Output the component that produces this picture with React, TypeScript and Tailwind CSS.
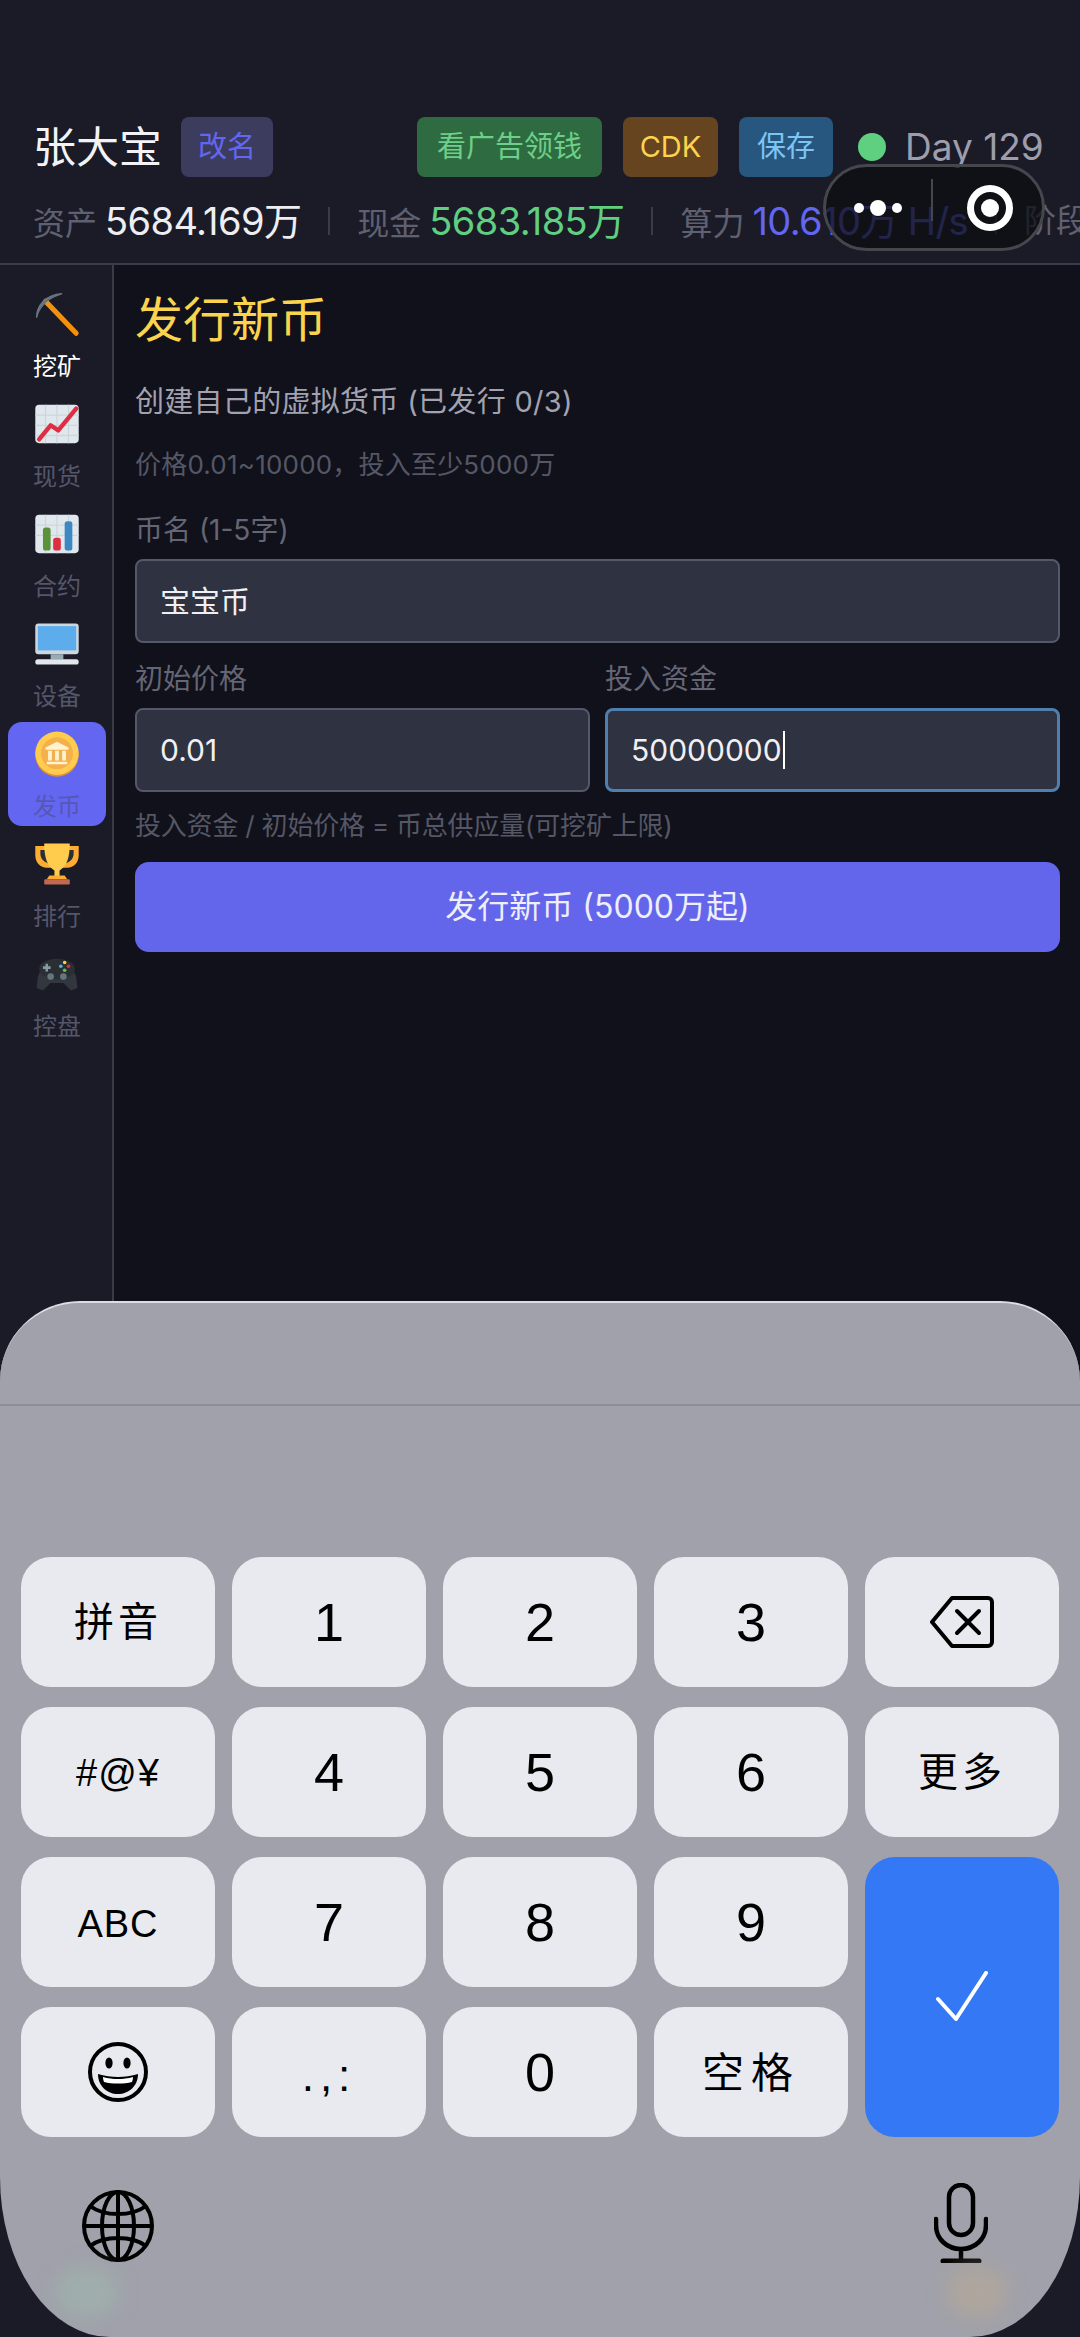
import type { ReactNode } from 'react';

const FONT = "font-['Inter','Noto_Sans_CJK_SC',sans-serif]";

function PickIcon() {
  return (
    <svg viewBox="0 0 36 36" className="h-[46px] w-[46px]">
      <path d="M33 33 9 8" stroke="#f4900c" strokeWidth="4" strokeLinecap="round" />
      <path d="M2 21C2 11 9 3 22 2c-6 2-11 4-14 8-3 3-5 6-6 11z" fill="#66757f" stroke="#66757f" strokeWidth="1" />
    </svg>
  );
}

function ChartUpIcon() {
  return (
    <svg viewBox="0 0 36 36" className="h-[46px] w-[46px]">
      <rect x="1" y="3" width="34" height="30" rx="3" fill="#e1e8ed" />
      <path d="M1 11h34M1 19h34M1 27h34M9 3v30M18 3v30M27 3v30" stroke="#ccd6dd" strokeWidth="1" />
      <path d="M4 30 13 19l6 4L33 6" fill="none" stroke="#dd2e44" strokeWidth="3.4" strokeLinecap="round" strokeLinejoin="round" />
    </svg>
  );
}

function BarsIcon() {
  return (
    <svg viewBox="0 0 36 36" className="h-[46px] w-[46px]">
      <rect x="1" y="3" width="34" height="30" rx="3" fill="#e1e8ed" />
      <path d="M1 11h34M1 19h34M9 3v30M18 3v30M27 3v30" stroke="#ccd6dd" strokeWidth="1" />
      <rect x="7" y="13" width="6" height="18" rx="2" fill="#5c913b" />
      <rect x="15" y="21" width="6" height="10" rx="2" fill="#dd2e44" />
      <rect x="24" y="8" width="6" height="23" rx="2" fill="#3b88c3" />
    </svg>
  );
}

function DesktopIcon() {
  return (
    <svg viewBox="0 0 36 36" className="h-[46px] w-[46px]">
      <rect x="1" y="2" width="34" height="24" rx="2.5" fill="#ccd6dd" />
      <rect x="3" y="4" width="30" height="19" fill="#5dadec" />
      <path d="M13 26h10v4H13z" fill="#99aab5" />
      <rect x="1" y="30" width="34" height="4" rx="2" fill="#e1e8ed" />
    </svg>
  );
}

function CoinIcon() {
  return (
    <svg viewBox="0 0 36 36" className="h-[46px] w-[46px]">
      <circle cx="18" cy="18.8" r="17" fill="#e0912f" />
      <circle cx="18" cy="17.4" r="17" fill="#ffcc4d" />
      <circle cx="18" cy="17.4" r="12.5" fill="#f4b04a" />
      <path d="M18 8.5 27 13v1.6H9V13z M10 24h16v2H10z M11 15.5h3v7.5h-3z M16.5 15.5h3v7.5h-3z M22 15.5h3v7.5h-3z" fill="#fff2cf" />
    </svg>
  );
}

function TrophyIcon() {
  return (
    <svg viewBox="0 0 36 36" className="h-[46px] w-[46px]">
      <path d="M1 4h34v7c0 6-4 10-9 10H10C5 21 1 17 1 11z" fill="#ffac33" />
      <path d="M5 7h5c0 4 1 8 3 11-5-1-8-4-8-8z M31 7h-5c0 4-1 8-3 11 5-1 8-4 8-8z" fill="#292f33" />
      <path d="M8 2h20c0 10-2 18-8 21v5h-4v-5C10 20 8 12 8 2z" fill="#ffcc4d" />
      <path d="M12 27h12l2 3H10z" fill="#ffac33" />
      <rect x="8" y="30" width="20" height="4" rx="1" fill="#c1694f" />
    </svg>
  );
}

function GamepadIcon() {
  return (
    <svg viewBox="0 0 36 36" className="h-[46px] w-[46px]">
      <path d="M3 20 8 9h20l5 11 1 9-5 2-6-6H13l-6 6-5-2z" fill="#31373d" />
      <ellipse cx="18" cy="14" rx="14" ry="8" fill="#292f33" />
      <path d="M9 10h2v2h2v2h-2v2H9v-2H7v-2h2z" fill="#8899a6" />
      <circle cx="24" cy="9" r="1.4" fill="#ffcc4d" />
      <circle cx="24" cy="15" r="1.4" fill="#77b255" />
      <circle cx="21" cy="12" r="1.4" fill="#55acee" />
      <circle cx="27" cy="12" r="1.4" fill="#dd2e44" />
      <circle cx="13" cy="20" r="2.6" fill="#66757f" />
      <circle cx="23" cy="20" r="2.6" fill="#66757f" />
    </svg>
  );
}

const NAV: { label: string; icon: ReactNode; active?: boolean; current?: boolean }[] = [
  { label: '挖矿', icon: <PickIcon />, current: true },
  { label: '现货', icon: <ChartUpIcon /> },
  { label: '合约', icon: <BarsIcon /> },
  { label: '设备', icon: <DesktopIcon /> },
  { label: '发币', icon: <CoinIcon />, active: true },
  { label: '排行', icon: <TrophyIcon /> },
  { label: '控盘', icon: <GamepadIcon /> },
];

function Tag({ className, children }: { className: string; children: ReactNode }) {
  return (
    <span className={`flex h-[60px] items-center justify-center rounded-[8px] text-[29px] ${className}`}>
      {children}
    </span>
  );
}

function Stat({ label, value, color }: { label: string; value: string; color: string }) {
  return (
    <span className="flex shrink-0 items-baseline gap-[8px]">
      <span className="text-[32px] text-[#5f6070]">{label}</span>
      {value && <span className={`text-[38px] tracking-[-0.6px] ${color}`}>{value}</span>}
    </span>
  );
}

function Header() {
  return (
    <header className="shrink-0 border-b-2 border-[#3a3b49] bg-[#1a1b27] pb-[20px] pl-[33px] pt-[117px]">
      <div className="flex h-[60px] items-center">
        <span className="w-[129px] whitespace-nowrap text-[43px] text-[#f3f3f6]">张大宝</span>
        <Tag className="ml-[19px] w-[92px] bg-[#3c3c5e] text-[#6366f1]">改名</Tag>
        <Tag className="ml-[144px] w-[185px] bg-[#2f6b40] text-[#6dcf8a]">看广告领钱</Tag>
        <Tag className="ml-[21px] w-[95px] bg-[#664420] text-[#fcd34d]">CDK</Tag>
        <Tag className="ml-[21px] w-[94px] bg-[#27567f] text-[#7cc4f4]">保存</Tag>
        <span className="ml-[25px] h-[28px] w-[28px] rounded-full bg-[#5fcf80]" />
        <span className="ml-[19px] whitespace-nowrap text-[37px] text-[#9d9dac]">Day 129</span>
      </div>
      <div className="mt-[22px] flex h-[44px] items-center overflow-hidden whitespace-nowrap">
        <Stat label="资产" value="5684.169万" color="text-[#eeeef2]" />
        <span className="mx-[27px] h-[28px] w-[2px] shrink-0 bg-[#3a3b49]" />
        <Stat label="现金" value="5683.185万" color="text-[#5fcf80]" />
        <span className="mx-[27px] h-[28px] w-[2px] shrink-0 bg-[#3a3b49]" />
        <Stat label="算力" value="10.610万 H/s" color="text-[#6366f1]" />
        <span className="mx-[27px] h-[28px] w-[2px] shrink-0 bg-[#3a3b49]" />
        <Stat label="阶段" value="" color="" />
      </div>
    </header>
  );
}

function Sidebar() {
  return (
    <nav className="flex w-[114px] shrink-0 flex-col gap-[6px] border-r-2 border-[#3a3b49] bg-[#1a1b27] pl-[8px] pr-[6px] pt-[17px]">
      {NAV.map(item => (
        <div
          key={item.label}
          className={`flex h-[104px] flex-col items-center rounded-[14px] pt-[9px] ${item.active ? 'bg-[#6366f1]' : ''}`}
        >
          <div className="flex h-[46px] items-center justify-center">{item.icon}</div>
          <span className={`mt-[14px] text-[24px] leading-[32px] ${item.current ? 'text-white' : item.active ? 'text-[#5557b4]' : 'text-[#55566a]'}`}>
            {item.label}
          </span>
        </div>
      ))}
    </nav>
  );
}

function Field({ value, focused, caret }: { value: string; focused?: boolean; caret?: boolean }) {
  return (
    <div
      className={`mt-[9px] flex h-[84px] items-center rounded-[8px] bg-[#2f3240] px-[23px] text-[30px] text-[#f0f0f4] ${focused ? 'border-[3px] border-[#4f7fae]' : 'border-2 border-[#55576a]'}`}
    >
      {value}
      {caret && <span className="ml-[1px] h-[38px] w-[2px] bg-white" />}
    </div>
  );
}

function Form() {
  return (
    <main className="min-w-0 flex-1 bg-[#10111a] pl-[21px] pr-[20px] pt-[23px]">
      <h1 className="text-[48px] leading-[64px] text-[#fcd34d]">发行新币</h1>
      <p className="mt-[30px] text-[29px] leading-[40px] tracking-[0.3px] text-[#a2a2b0]">创建自己的虚拟货币 (已发行 0/3)</p>
      <p className="mt-[25px] text-[26px] leading-[36px] tracking-[0.2px] text-[#565766]">价格0.01~10000，投入至少5000万</p>
      <label className="mt-[27px] block text-[28px] leading-[40px] text-[#656675]">币名 (1-5字)</label>
      <Field value="宝宝币" />
      <div className="mt-[16px] grid grid-cols-2 gap-[15px]">
        <div>
          <label className="block text-[28px] leading-[40px] text-[#656675]">初始价格</label>
          <Field value="0.01" />
        </div>
        <div>
          <label className="block text-[28px] leading-[40px] text-[#656675]">投入资金</label>
          <Field value="50000000" focused caret />
        </div>
      </div>
      <p className="mt-[16px] text-[26px] leading-[36px] tracking-[-0.2px] text-[#565766]">投入资金 / 初始价格 = 币总供应量(可挖矿上限)</p>
      <button className="mt-[18px] h-[90px] w-full rounded-[14px] bg-[#6366ea] text-[32px] text-[#eeeefc]">
        发行新币 (5000万起)
      </button>
    </main>
  );
}

function Capsule() {
  return (
    <div className="absolute left-[823px] top-[164px] flex h-[87px] w-[222px] items-center rounded-full border-[3px] border-[#46474d] bg-[#0e0f13]/75">
      <div className="ml-[28px] flex items-center gap-[6px]">
        <span className="h-[10px] w-[10px] rounded-full bg-white" />
        <span className="h-[16px] w-[16px] rounded-full bg-white" />
        <span className="h-[10px] w-[10px] rounded-full bg-white" />
      </div>
      <span className="ml-[29px] h-[42px] w-[2px] -translate-y-[8px] bg-[#46474d]" />
      <span className="ml-[34px] flex h-[46px] w-[46px] items-center justify-center rounded-full border-[7px] border-white">
        <span className="h-[18px] w-[18px] rounded-full bg-white" />
      </span>
    </div>
  );
}

function Key({ children, className = 'bg-[#e9eaef]' }: { children?: ReactNode; className?: string }) {
  return (
    <div className={`flex items-center justify-center rounded-[30px] text-black ${className}`}>
      {children}
    </div>
  );
}

function Digit({ n }: { n: string }) {
  return <Key className="bg-[#e9eaef] font-['Liberation_Sans',sans-serif] text-[54px]">{n}</Key>;
}

function Keyboard() {
  return (
    <div className="absolute inset-x-0 bottom-0 h-[1036px] overflow-hidden rounded-bl-[110px_160px] rounded-br-[110px_160px] rounded-t-[80px] border-t-2 border-[#dcdce2] bg-[#a0a1aa]">
      <div className="h-[103px] border-b-2 border-[#8c8d97]" />
      <div className="grid grid-cols-5 grid-rows-[repeat(4,130px)] gap-x-[17px] gap-y-[20px] px-[21px] pt-[151px]">
        <Key className="bg-[#e9eaef] text-[40px] tracking-[4px]">拼音</Key>
        <Digit n="1" />
        <Digit n="2" />
        <Digit n="3" />
        <Key>
          <svg viewBox="0 0 64 52" className="h-[52px] w-[64px]" fill="none" stroke="black" strokeWidth="4" strokeLinejoin="round" strokeLinecap="round">
            <path d="M22 2h36a4 4 0 0 1 4 4v40a4 4 0 0 1-4 4H22L2 26z" />
            <path d="M27 15l22 22M49 15 27 37" />
          </svg>
        </Key>
        <Key className="bg-[#e9eaef] pt-[3px] font-['Liberation_Sans',sans-serif] text-[38px] tracking-[1px]">#@¥</Key>
        <Digit n="4" />
        <Digit n="5" />
        <Digit n="6" />
        <Key className="bg-[#e9eaef] text-[40px] tracking-[4px]">更多</Key>
        <Key className="bg-[#e9eaef] pt-[4px] font-['Liberation_Sans',sans-serif] text-[38px] tracking-[1px]">ABC</Key>
        <Digit n="7" />
        <Digit n="8" />
        <Digit n="9" />
        <Key className="row-span-2 bg-[#3478f6]">
          <svg viewBox="0 0 52 52" className="h-[52px] w-[52px]" fill="none" stroke="white" strokeWidth="4" strokeLinecap="round" strokeLinejoin="round">
            <path d="M2 28l18 20L50 2" />
          </svg>
        </Key>
        <Key>
          <svg viewBox="0 0 60 60" className="h-[60px] w-[60px]">
            <circle cx="30" cy="30" r="28" fill="none" stroke="black" strokeWidth="4" />
            <ellipse cx="21" cy="21" rx="3.6" ry="5.5" />
            <ellipse cx="39" cy="21" rx="3.6" ry="5.5" />
            <path d="M10 32c6 2 14 3 20 3s14-1 20-3c0 12-9 20-20 20S10 44 10 32z" />
            <path d="M15 35c5 1.500 10 2 15 2s10-.5 15-2c0 2-.5 3.500-1 5-4 1-9 1.500-14 1.500S20 41 16 40c-.5-1.500-1-3-1-5z" fill="white" />
          </svg>
        </Key>
        <Key className="bg-[#e9eaef] pt-[8px] font-['Liberation_Sans',sans-serif] text-[44px] tracking-[6px]">.,:</Key>
        <Digit n="0" />
        <Key className="bg-[#e9eaef] text-[42px] tracking-[7px]">空格</Key>
      </div>
      <div className="mt-[46px] flex items-start justify-between pl-[81px] pr-[92px]">
        <svg viewBox="0 0 74 74" className="mt-[6px] h-[74px] w-[74px]" fill="none" stroke="black" strokeWidth="4">
          <circle cx="37" cy="37" r="34" />
          <ellipse cx="37" cy="37" rx="16" ry="34" />
          <path d="M37 3v68M3 37h68M9 17c8 6 17 8 28 8s20-2 28-8M9 57c8-6 17-8 28-8s20 2 28 8" />
        </svg>
        <svg viewBox="0 0 54 80" className="h-[80px] w-[54px]" fill="none" stroke="black" strokeWidth="4.500" strokeLinecap="round">
          <rect x="15" y="2" width="24" height="50" rx="12" />
          <path d="M2 36v6c0 14 11 24 25 24s25-10 25-24v-6M27 66v12" />
          <path d="M9 78h36" strokeWidth="5" />
        </svg>
      </div>
      <div className="absolute bottom-[20px] left-[54px] h-[50px] w-[66px] rounded-full bg-[#9fb3ad] opacity-70 blur-[10px]" />
      <div className="absolute bottom-[20px] right-[72px] h-[50px] w-[62px] rounded-full bg-[#b5a898] opacity-70 blur-[10px]" />
    </div>
  );
}

export default function App() {
  return (
    <div className={`relative flex h-[2337px] w-[1080px] flex-col overflow-hidden bg-[#1a1b27] ${FONT}`}>
      <Header />
      <div className="flex flex-1">
        <Sidebar />
        <Form />
      </div>
      <div className="h-[130px] shrink-0 bg-[#1a1b27]" />
      <Capsule />
      <Keyboard />
    </div>
  );
}
